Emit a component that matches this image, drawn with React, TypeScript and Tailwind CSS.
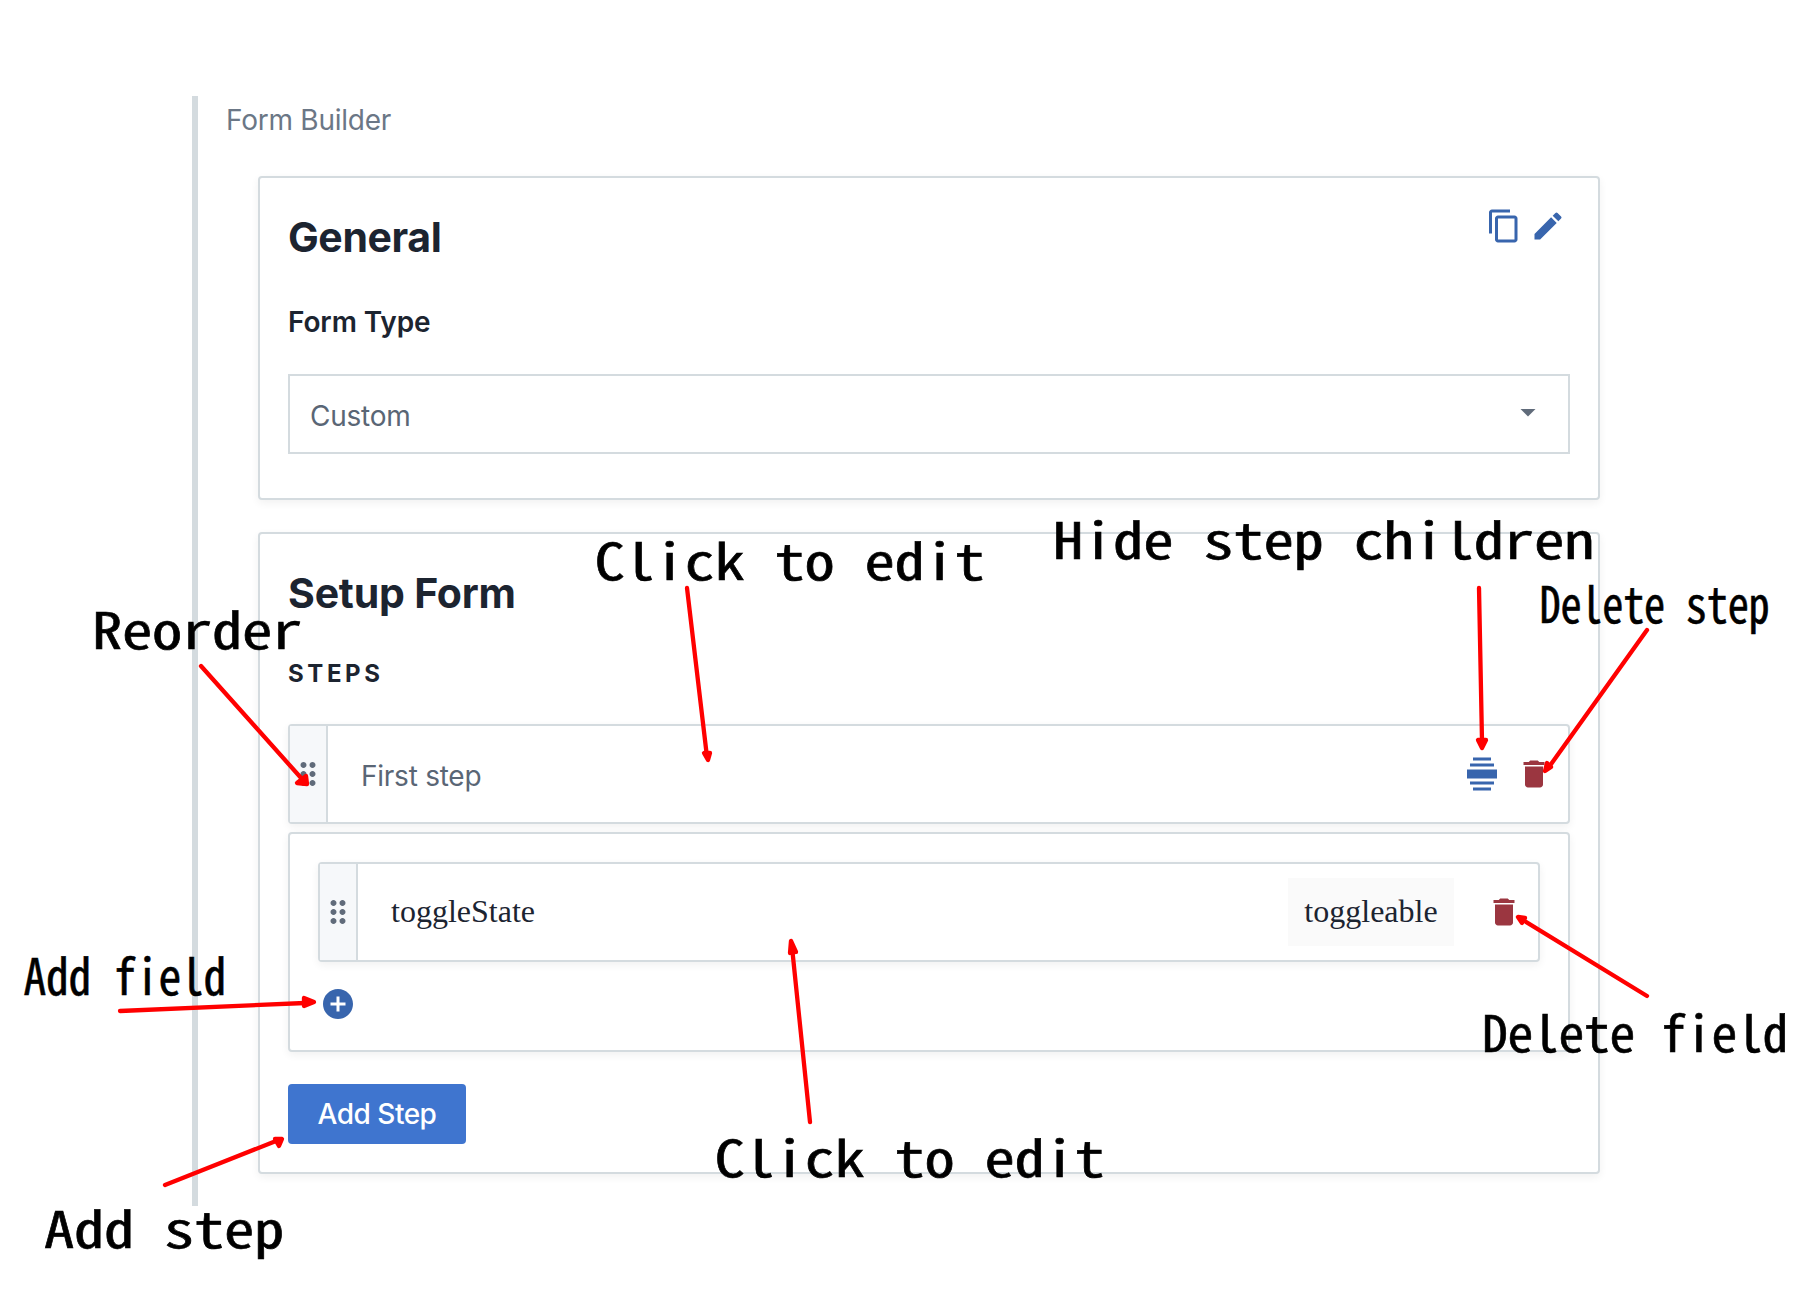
import type { ReactNode } from "react";
import {
  MdAddCircle,
  MdArrowDropDown,
  MdContentCopy,
  MdDelete,
  MdDragIndicator,
  MdEdit,
} from "react-icons/md";

const LABELS = [
  { text: "Reorder", x: 92, y: 648.5, length: 210 },
  { text: "Click to edit", x: 594.5, y: 579.5, length: 390 },
  { text: "Hide step children", x: 1053, y: 558.5, length: 541 },
  { text: "Delete step", x: 1539.5, y: 623, length: 230 },
  { text: "Add field", x: 23.5, y: 995, length: 202.5 },
  { text: "Add step", x: 44, y: 1247.5, length: 240 },
  { text: "Click to edit", x: 714.5, y: 1176.5, length: 390 },
  { text: "Delete field", x: 1482, y: 1052, length: 306 },
];

const ARROWS = [
  { line: "M201 666L302 779", head: "297,783 307,784 306,776" },
  { line: "M687 588L707 757", head: "704,753 710,753 708,760" },
  { line: "M1479 588L1482 741", head: "1478,740 1486,740 1482,748" },
  { line: "M1647 630L1549 767", head: "1547,763 1551,767 1545,771" },
  { line: "M120 1011L305 1003", head: "304,998 304,1006 314,1002" },
  { line: "M165 1185L276 1141", head: "275,1139 279,1146 282,1139" },
  { line: "M810 1122L792 947", head: "790,953 796,952 791,941" },
  { line: "M1647 996L1523 920", head: "1518,917 1525,918 1522,923" },
];

function Card({ children, className }: { children: ReactNode; className: string }) {
  return (
    <section
      className={`rounded border-2 border-[#d4dbdf] bg-white shadow-[0_3px_8px_rgba(0,0,0,0.06)] ${className}`}
    >
      {children}
    </section>
  );
}

function Handle() {
  return (
    <div className="flex w-[38px] shrink-0 items-center justify-center border-r-2 border-[#d4dbdf] bg-[#f6f8fa]">
      <MdDragIndicator className="size-9 shrink-0 text-[#606b7a]" />
    </div>
  );
}

function CollapseIcon() {
  return (
    <svg viewBox="0 0 24 24" className="size-9" fill="currentColor">
      <rect x="6" y="1" width="12" height="2" />
      <rect x="4" y="5" width="16" height="2" />
      <rect x="2" y="9" width="20" height="6" />
      <rect x="4" y="17" width="16" height="2" />
      <rect x="6" y="21" width="12" height="2" />
    </svg>
  );
}

function Annotations() {
  return (
    <svg
      className="pointer-events-none absolute inset-0"
      width="1800"
      height="1300"
      viewBox="0 0 1800 1300"
    >
      {LABELS.map((l) => (
        <text
          key={`${l.text}${l.x}`}
          x={l.x}
          y={l.y}
          textLength={l.length}
          lengthAdjust="spacingAndGlyphs"
          className="fill-black stroke-black stroke-[0.6px] font-['Noto_Sans_Mono_CJK_SC','DejaVu_Sans_Mono',monospace] text-[50px]"
        >
          {l.text}
        </text>
      ))}
      <g stroke="#ff0000" strokeWidth="4.3" strokeLinecap="round" strokeLinejoin="round" fill="#ff0000">
        {ARROWS.map((a) => (
          <g key={a.line}>
            <path d={a.line} />
            <polygon points={a.head} />
          </g>
        ))}
      </g>
    </svg>
  );
}

export default function App() {
  return (
    <div className="relative h-[1300px] w-[1800px] overflow-hidden bg-white pt-24 pl-48 font-['Inter',sans-serif] text-[28px] tracking-[-0.25px] text-[#1c2430]">
      <main className="h-[1110px] w-[1408px] border-l-[6px] border-[#d4dbdf] pl-[60px]">
        <div className="-ml-8 flex h-20 items-start pt-1 leading-10 text-[#6b7786]">
          Form Builder
        </div>
        <Card className="h-[324px] px-7">
          <div className="flex items-start justify-between pt-[29px]">
            <h2 className="pt-0.5 text-[41px] leading-[56px] font-bold tracking-[-0.4px]">General</h2>
            <div className="flex gap-2 pt-px pr-1 text-[#3865ad]">
              <MdContentCopy className="size-9" />
              <MdEdit className="size-9" />
            </div>
          </div>
          <div className="mt-[37px] leading-10 font-semibold tracking-[-0.12px]">Form Type</div>
          <div className="mt-8 flex h-20 items-center justify-between border-2 border-[#d4dbdf] pr-[22px] pl-5 text-[#5a6675]">
            <span className="pt-1">Custom</span>
            <MdArrowDropDown className="-mt-1 size-9 text-[#606b7a]" />
          </div>
        </Card>
        <Card className="mt-8 h-[642px] px-7">
          <h2 className="pt-[31px] text-[41px] leading-[56px] font-bold tracking-[-0.2px]">Setup Form</h2>
          <div className="mt-[35px] text-2xl leading-9 font-bold tracking-[3.6px]">STEPS</div>
          <Card className="mt-8 flex h-[100px]">
            <Handle />
            <div className="flex flex-1 items-center justify-between pr-4 pl-[33px] text-[#5a6675]">
              <span className="pt-1">First step</span>
              <div className="flex gap-4">
                <span className="text-[#3865ad]">
                  <CollapseIcon />
                </span>
                <MdDelete className="size-9 text-[#9b3640]" />
              </div>
            </div>
          </Card>
          <Card className="mt-2 h-[220px] px-7 pt-7">
            <Card className="flex h-[100px]">
              <Handle />
              <div className="flex flex-1 items-center pr-4 pl-[33px] font-['Liberation_Serif',serif] text-[32px] tracking-normal text-[#1c2431]">
                <span className="flex-1 pb-0.5">toggleState</span>
                <span className="flex h-[68px] w-[166px] items-center justify-center bg-[#fafafa] pb-0.5">
                  toggleable
                </span>
                <MdDelete className="ml-8 size-9 text-[#9b3640]" />
              </div>
            </Card>
            <MdAddCircle className="mt-6 ml-0.5 size-9 text-[#3865ad]" />
          </Card>
          <button className="mt-8 flex h-[60px] w-[178px] items-center justify-center rounded bg-[#3f75cf] font-medium tracking-[-0.5px] text-white">
            Add Step
          </button>
        </Card>
      </main>
      <Annotations />
    </div>
  );
}
